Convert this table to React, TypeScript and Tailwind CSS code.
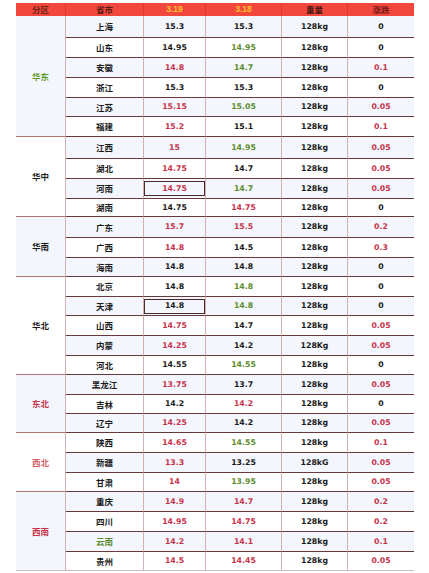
import React from 'react'

type Tone = 'k' | 'r' | 'g'

// province, 3.19, tone, 3.18, tone, weight, change, tone, boxed
type Row = [string, string, Tone, string, Tone, string, string, Tone, boolean?]

const TONE: Record<Tone, string> = {
  k: 'text-[#1a1a1a]',
  r: 'text-[#c8324a]',
  g: 'text-[#5c8c2c]',
}

const REGIONS: { name: string; tone: string; rows: Row[] }[] = [
  {
    name: '华东',
    tone: 'text-[#5f9a2a]',
    rows: [
      ['上海', '15.3', 'k', '15.3', 'k', '128kg', '0', 'k'],
      ['山东', '14.95', 'k', '14.95', 'g', '128kg', '0', 'k'],
      ['安徽', '14.8', 'r', '14.7', 'g', '128kg', '0.1', 'r'],
      ['浙江', '15.3', 'k', '15.3', 'k', '128kg', '0', 'k'],
      ['江苏', '15.15', 'r', '15.05', 'g', '128kg', '0.05', 'r'],
      ['福建', '15.2', 'r', '15.1', 'k', '128kg', '0.1', 'r'],
    ],
  },
  {
    name: '华中',
    tone: 'text-[#1a1a1a]',
    rows: [
      ['江西', '15', 'r', '14.95', 'g', '128kg', '0.05', 'r'],
      ['湖北', '14.75', 'r', '14.7', 'k', '128kg', '0.05', 'r'],
      ['河南', '14.75', 'r', '14.7', 'g', '128kg', '0.05', 'r', true],
      ['湖南', '14.75', 'k', '14.75', 'r', '128kg', '0', 'k'],
    ],
  },
  {
    name: '华南',
    tone: 'text-[#1a1a1a]',
    rows: [
      ['广东', '15.7', 'r', '15.5', 'r', '128kg', '0.2', 'r'],
      ['广西', '14.8', 'r', '14.5', 'k', '128kg', '0.3', 'r'],
      ['海南', '14.8', 'k', '14.8', 'k', '128kg', '0', 'k'],
    ],
  },
  {
    name: '华北',
    tone: 'text-[#1a1a1a]',
    rows: [
      ['北京', '14.8', 'k', '14.8', 'g', '128kg', '0', 'k'],
      ['天津', '14.8', 'k', '14.8', 'g', '128kg', '0', 'k', true],
      ['山西', '14.75', 'r', '14.7', 'k', '128kg', '0.05', 'r'],
      ['内蒙', '14.25', 'r', '14.2', 'k', '128Kg', '0.05', 'r'],
      ['河北', '14.55', 'k', '14.55', 'g', '128kg', '0', 'k'],
    ],
  },
  {
    name: '东北',
    tone: 'text-[#c8324a]',
    rows: [
      ['黑龙江', '13.75', 'r', '13.7', 'k', '128kg', '0.05', 'r'],
      ['吉林', '14.2', 'k', '14.2', 'r', '128kg', '0', 'k'],
      ['辽宁', '14.25', 'r', '14.2', 'k', '128kg', '0.05', 'r'],
    ],
  },
  {
    name: '西北',
    tone: 'text-[#d2606a]',
    rows: [
      ['陕西', '14.65', 'r', '14.55', 'g', '128kg', '0.1', 'r'],
      ['新疆', '13.3', 'r', '13.25', 'k', '128kG', '0.05', 'r'],
      ['甘肃', '14', 'r', '13.95', 'g', '128kg', '0.05', 'r'],
    ],
  },
  {
    name: '西南',
    tone: 'text-[#c8324a]',
    rows: [
      ['重庆', '14.9', 'r', '14.7', 'r', '128kg', '0.2', 'r'],
      ['四川', '14.95', 'r', '14.75', 'r', '128kg', '0.2', 'r'],
      ['云南', '14.2', 'r', '14.1', 'r', '128kg', '0.1', 'r'],
      ['贵州', '14.5', 'r', '14.45', 'r', '128kg', '0.05', 'r'],
    ],
  },
]

const SPAN: Record<number, string> = {
  3: 'row-span-3',
  4: 'row-span-4',
  5: 'row-span-5',
  6: 'row-span-6',
}

const cjk = "font-['Noto_Sans_CJK_SC',sans-serif]"
const num = "font-['DejaVu_Sans',sans-serif]"

export default function App() {
  let idx = 0

  return (
    <div className="min-h-screen bg-white pt-[3px] pl-[16px]">
      <div className="grid w-[398px] grid-cols-[50px_78px_62px_76px_66px_66px] grid-rows-[13px_22px_20px_20px_20px_19px_20px_22px_20px_20px_18px_21px_20px_19px_20px_19px_20px_20px_19px_20px_19px_19px_20px_20px_19px_20px_20px_20px_19px]">
        {/* Header */}
        <div className={`flex items-center justify-center bg-[#f2473c] border-r border-[#d63a30] text-[8.5px] font-bold text-[#6a2418] ${cjk}`}>分区</div>
        <div className={`flex items-center justify-center bg-[#f2473c] border-r border-[#d63a30] text-[8.5px] font-bold text-[#5a1a14] ${cjk}`}>省市</div>
        <div className="flex items-center justify-center bg-[#f2473c] border-r border-[#d63a30] text-[8.5px] font-bold text-[#ffc22e] font-['Liberation_Sans',sans-serif]">3.19</div>
        <div className="flex items-center justify-center bg-[#f2473c] border-r border-[#d63a30] text-[8.5px] font-bold text-[#ffc22e] font-['Liberation_Sans',sans-serif]">3.18</div>
        <div className={`flex items-center justify-center bg-[#f2473c] border-r border-[#d63a30] text-[8.5px] font-bold text-[#4a1712] ${cjk}`}>重量</div>
        <div className={`flex items-center justify-center bg-[#f2473c] text-[8.5px] font-bold text-[#7a1a18] ${cjk}`}>涨跌</div>

        {REGIONS.map((region, ri) => (
          <React.Fragment key={region.name}>
            <div
              className={`${SPAN[region.rows.length]} flex items-center justify-center border-r border-b border-r-[#d4b0b0] ${
                ri === REGIONS.length - 1 ? 'border-b-[#c9c0c0]' : 'border-b-[#a87474]'
              } ${ri % 2 === 0 ? 'bg-[#f3f7fd]' : 'bg-white'} text-[8.5px] font-bold ${region.tone} ${cjk}`}
            >
              {region.name}
            </div>
            {region.rows.map((row) => {
              const [prov, a, at, b, bt, w, d, dt, boxed] = row
              const stripe = idx % 2 === 0 ? 'bg-[#f3f7fd]' : 'bg-white'
              const last = idx === 27
              idx++
              const line = last ? 'border-b border-b-[#c9c0c0]' : 'border-b border-b-[#663a3a]'
              const cell = `flex items-center justify-center ${stripe} ${line}`
              return (
                <React.Fragment key={prov}>
                  <div className={`${cell} border-r border-r-[#d4b0b0] text-[8.5px] font-bold ${cjk} ${prov === '云南' ? 'text-[#5c8c2c]' : 'text-[#1a1a1a]'}`}>
                    {prov}
                  </div>
                  <div className={`${cell} border-r border-r-[#d4b0b0] text-[7.8px] font-bold ${num} ${TONE[at]}`}>
                    {boxed ? (
                      <div className="flex h-[15px] w-full items-center justify-center border border-[#4a2a2a]">{a}</div>
                    ) : (
                      a
                    )}
                  </div>
                  <div className={`${cell} border-r border-r-[#d4b0b0] text-[7.8px] font-bold ${num} ${TONE[bt]}`}>{b}</div>
                  <div className={`${cell} border-r border-r-[#d4b0b0] text-[7.8px] font-bold ${num} text-[#1a1a1a]`}>{w}</div>
                  <div className={`${cell} text-[7.8px] font-bold ${num} ${TONE[dt]}`}>{d}</div>
                </React.Fragment>
              )
            })}
          </React.Fragment>
        ))}
      </div>
    </div>
  )
}
